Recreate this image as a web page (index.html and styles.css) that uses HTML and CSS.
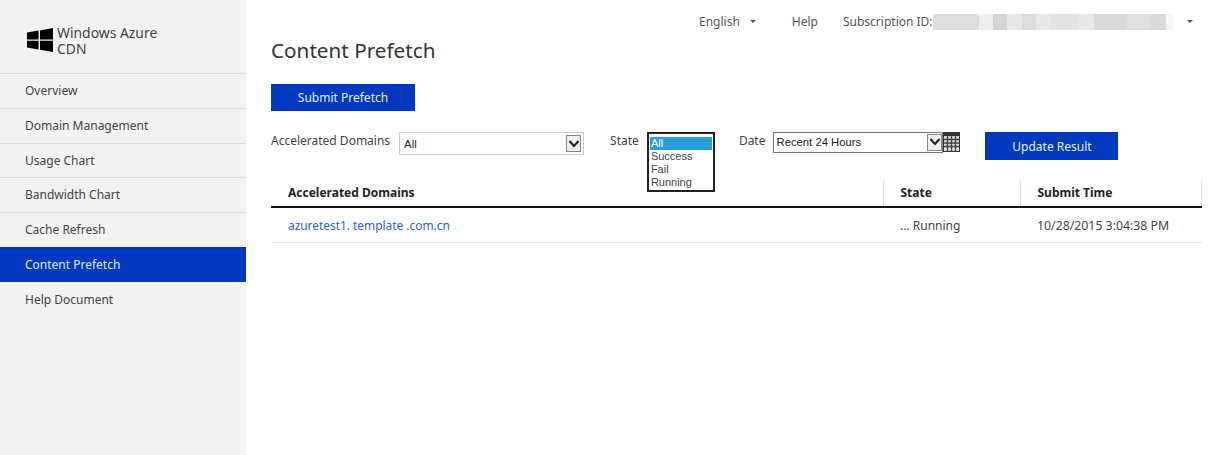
FILE: index.html
```html
<!DOCTYPE html>
<html lang="en">
<head>
    <meta charset="UTF-8">
    <title>Content Prefetch</title>
    <link rel="stylesheet" href="styles.css">
</head>
<body>
    <aside class="sidebar">
        <div class="logo">
            <svg class="logo-icon" width="26" height="26" viewBox="0 0 26 26">
                <path d="M0 5.5 L11.6 3.6 V12.4 H0 Z"/>
                <path d="M13 3.4 L26 1 V12.4 H13 Z"/>
                <path d="M0 13.8 H11.6 V22.4 L0 20.6 Z"/>
                <path d="M13 13.8 H26 V25 L13 22.7 Z"/>
            </svg>
            <div class="logo-text">Windows Azure<br>CDN</div>
        </div>
        <nav class="menu">
            <a class="menu-item">Overview</a>
            <a class="menu-item">Domain Management</a>
            <a class="menu-item">Usage Chart</a>
            <a class="menu-item">Bandwidth Chart</a>
            <a class="menu-item">Cache Refresh</a>
            <a class="menu-item active">Content Prefetch</a>
            <a class="menu-item">Help Document</a>
        </nav>
    </aside>

    <main class="content">
        <div class="topbar">
            <span class="top-link">English</span>
            <span class="caret caret-lang"></span>
            <span class="top-link help">Help</span>
            <span class="top-link">Subscription ID:</span>
            <span class="blurred"></span>
            <span class="caret"></span>
        </div>

        <h1>Content Prefetch</h1>

        <button class="btn btn-submit">Submit Prefetch</button>

        <div class="filters">
            <label class="filter-label">Accelerated Domains</label>
            <div class="select select-domain">
                <span>All</span>
                <span class="select-arrow">
                    <svg width="12" height="10" viewBox="0 0 12 10"><path d="M1.5 2 L6 7 L10.5 2" fill="none" stroke="#222" stroke-width="2"/></svg>
                </span>
            </div>
            <label class="filter-label label-state">State</label>
            <div class="listbox">
                <div class="option selected">All</div>
                <div class="option">Success</div>
                <div class="option">Fail</div>
                <div class="option">Running</div>
            </div>
            <label class="filter-label label-date">Date</label>
            <div class="select select-date">
                <span>Recent 24 Hours</span>
                <span class="select-arrow">
                    <svg width="12" height="10" viewBox="0 0 12 10"><path d="M1.5 2 L6 7 L10.5 2" fill="none" stroke="#222" stroke-width="2"/></svg>
                </span>
            </div>
            <svg class="calendar" width="17" height="20" viewBox="0 0 17 20">
                <rect x="0" y="0" width="17" height="20" fill="#333"/>
                <rect x="1" y="4" width="15" height="15" fill="#ddd"/>
                <path d="M1 7.5 H16 M1 11 H16 M1 14.5 H16 M4.5 4 V19 M8.5 4 V19 M12.5 4 V19" stroke="#444" stroke-width="1.4"/>
            </svg>
            <button class="btn btn-update">Update Result</button>
        </div>

        <table class="results">
            <tr>
                <th class="col-domain">Accelerated Domains</th>
                <th class="col-state">State</th>
                <th class="col-time">Submit Time</th>
            </tr>
            <tr>
                <td><a class="domain-link">azuretest1. template .com.cn</a></td>
                <td>... Running</td>
                <td class="time-cell">10/28/2015 3:04:38 PM</td>
            </tr>
        </table>
    </main>
</body>
</html>
```

FILE: styles.css
```css
/* Page */
html, body {
    height: 100%;
}

body {
    margin: 0;
    display: flex;
    background-color: #fff;
    color: #444;
    font-family: "Noto Sans", Arial, sans-serif;
    font-size: 12px;
    overflow: hidden;
}

/* Sidebar */
.sidebar {
    width: 246px;
    flex-shrink: 0;
    background-color: #f2f2f2;
}

.logo {
    height: 73px;
    box-sizing: border-box;
    padding: 27px 0 0 27px;
    display: flex;
    align-items: flex-start;
    gap: 4px;
}

.logo-icon {
    fill: #000;
    flex-shrink: 0;
}

.logo-text {
    font-size: 13.9px;
    line-height: 16px;
    color: #444;
    margin-top: -2px;
}

.menu-item {
    display: block;
    height: 33.8px;
    line-height: 34.6px;
    padding-left: 25px;
    border-top: 1px solid #dcdcdc;
}

.menu-item.active {
    background-color: #0039bf;
    color: #dfe8ff;
    border-top-color: #0039bf;
}

.menu-item.active + .menu-item {
    border-top-color: #f2f2f2;
}

/* Main area */
.content {
    flex: 1;
    padding: 0 28px 0 25px;
    min-width: 0;
}

.topbar {
    height: 41px;
    box-sizing: border-box;
    padding-top: 2px;
    display: flex;
    align-items: center;
    color: #555;
    margin-left: 428px;
}

.help {
    margin-right: 25px;
}

.caret {
    width: 0;
    height: 0;
    margin-left: 14px;
    border-left: 3px solid transparent;
    border-right: 3px solid transparent;
    border-top: 3px solid #555;
}

.caret-lang {
    margin-left: 10px;
    margin-right: 36px;
}

.blurred {
    width: 240px;
    height: 16px;
    background: linear-gradient(90deg, #ddd 0 19%, #eee 19% 25%, #d5d5d5 25% 31%, #e8e8e8 31% 37%, #ddd 37% 43%, #e8e8e8 43% 49%, #e3e3e3 49% 61%, #e8e8e8 61% 67%, #dadada 67% 81%, #e0e0e0 81% 91%, #dadada 91% 97%, #f6f6f6 97% 100%);
}

h1 {
    margin: -1px 0 24px;
    font-size: 20.7px;
    font-weight: 400;
    line-height: 20px;
    color: #333;
}

.btn {
    border: 0;
    background-color: #0039bf;
    color: #e8eeff;
    font-family: inherit;
    font-size: 12px;
    display: block;
}

.btn-submit {
    width: 144px;
    height: 27px;
    margin-bottom: 21px;
}

/* Filter row */
.filters {
    height: 48px;
    display: flex;
    align-items: flex-start;
}

.filter-label {
    line-height: 17px;
}

.select {
    display: flex;
    align-items: center;
    justify-content: space-between;
    box-sizing: border-box;
    font-family: "Liberation Sans", Arial, sans-serif;
    font-size: 11.3px;
    color: #222;
    background-color: #fff;
}

.select-domain {
    width: 185px;
    height: 23px;
    margin-left: 9px;
    padding: 0 2px 0 4px;
    border: 1px solid #ccc;
}

.select-date {
    width: 170px;
    height: 21px;
    margin-left: 8px;
    padding: 0 0 1px 2px;
    border: 1px solid #777;
}

.select-arrow {
    width: 15px;
    height: 17px;
    display: flex;
    align-items: center;
    justify-content: center;
    background-color: #eee;
    border: 1px solid #888;
    box-sizing: border-box;
}

.label-state {
    margin-left: 26px;
}

.listbox {
    width: 68px;
    height: 60px;
    margin-left: 8px;
    box-sizing: border-box;
    padding: 3px 1px 0;
    border: 2px solid #222;
    background-color: #fff;
    font-family: "Liberation Sans", Arial, sans-serif;
    font-size: 11px;
    line-height: 13px;
    color: #444;
    position: relative;
}

.option {
    padding-left: 1px;
}

.option.selected {
    background-color: #26a0da;
    color: #fff;
}

.label-date {
    margin-left: 24px;
}

.calendar {
    flex-shrink: 0;
}

.btn-update {
    width: 133px;
    height: 28px;
    margin-left: 25px;
}

/* Results table */
.results {
    width: 931px;
    border-collapse: collapse;
    table-layout: fixed;
}

.results th {
    height: 25px;
    padding: 0 0 1px 17px;
    text-align: left;
    font-weight: 700;
    color: #222;
    border-bottom: 2px solid #111;
    border-right: 1px solid #ddd;
}

.col-domain {
    width: 594.5px;
}

.col-state {
    width: 119px;
}

.results td {
    height: 34px;
    padding: 0 0 0 17px;
    border-bottom: 1px solid #e6e6e6;
}

.time-cell {
    font-size: 12.3px;
}

.domain-link {
    color: #2b5fd0;
    font-size: 11.9px;
}
```
